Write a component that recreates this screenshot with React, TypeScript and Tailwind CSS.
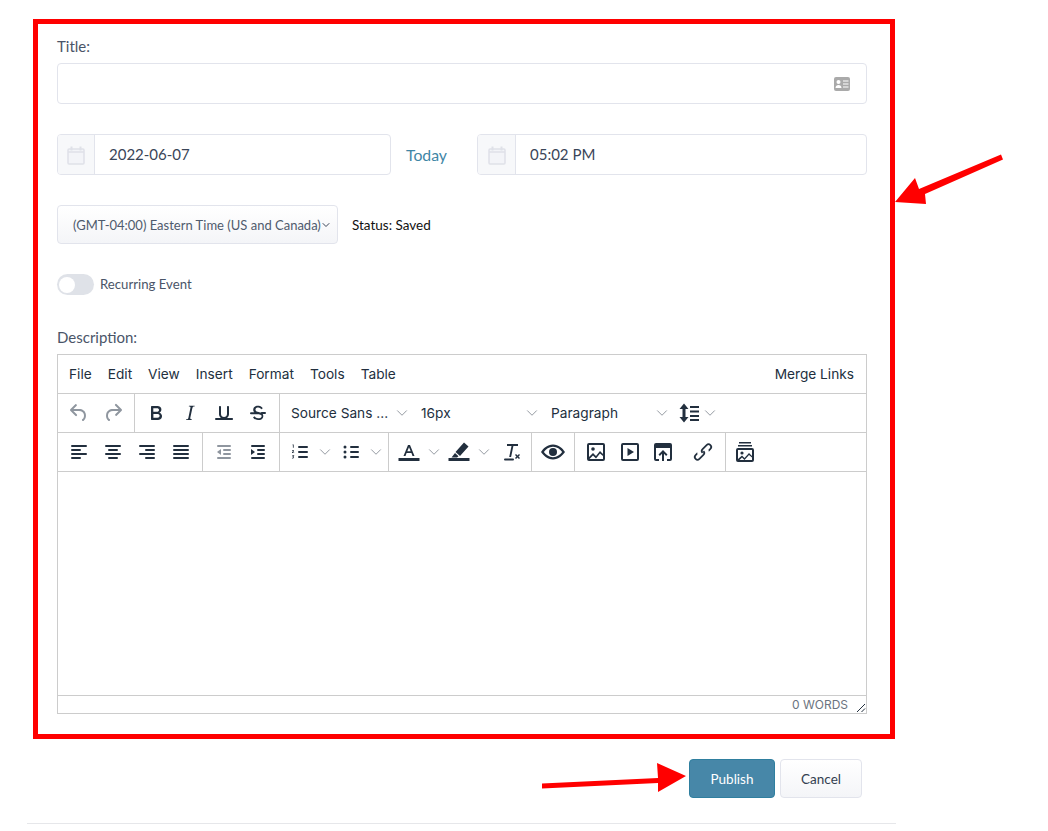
import type { ReactNode } from 'react'
import { ChevronDown } from 'lucide-react'

const sans = 'font-["Lato",sans-serif]'

function Icon({
  children,
  className = 'text-[#222f3e]',
  box = '0 0 24 24',
}: {
  children: ReactNode
  className?: string
  box?: string
}) {
  return (
    <svg viewBox={box} className={`h-6 w-6 shrink-0 fill-current ${className}`}>
      {children}
    </svg>
  )
}

function Lines({ rows }: { rows: [number, number, number][] }) {
  return (
    <>
      {rows.map(([x, y, w]) => (
        <rect key={`${x}-${y}`} x={x} y={y} width={w} height={2} rx={1} />
      ))}
    </>
  )
}

function Chevron() {
  return <ChevronDown className="h-[18px] w-[18px] shrink-0 text-[#8d939b]" strokeWidth={1.25} />
}

function Btn({ children, w = 'w-[34px]' }: { children: ReactNode; w?: string }) {
  return <div className={`flex h-[38px] items-center justify-center ${w}`}>{children}</div>
}

function Split({ children, w = 'w-[51px]' }: { children: ReactNode; w?: string }) {
  return (
    <div className={`flex h-[38px] items-center pl-1 ${w}`}>
      {children}
      <span className="ml-[4px]">
        <Chevron />
      </span>
    </div>
  )
}

function Group({ children, className = '' }: { children: ReactNode; className?: string }) {
  return <div className={`flex border-r border-[#ccc] pl-1 ${className}`}>{children}</div>
}

function FontSelect({ label }: { label: string }) {
  return (
    <div className="flex h-[38px] w-[130px] items-center justify-between pl-[7px] pr-[3px] text-[13.7px] text-[#222f3e]">
      <span className="pt-px">{label}</span>
      <Chevron />
    </div>
  )
}

function Calendar() {
  return (
    <svg viewBox="0 0 18 20" className="h-5 w-[18px] fill-none stroke-[#dfe1e8]">
      <rect x="1" y="4" width="16" height="15" rx="1" fill="#f3f4f8" strokeWidth="1.5" />
      <path d="M1 7h16" strokeWidth="1.5" />
      <path d="M4.500 1.500v4M13.500 1.500v4" strokeWidth="2" />
    </svg>
  )
}

function DateField({ value, className, addon }: { value: string; className: string; addon: string }) {
  return (
    <div className={`flex h-[41px] overflow-hidden rounded border border-[#e2e4ec] ${className}`}>
      <div className={`flex items-center justify-center border-r border-[#e2e4ec] bg-[#f7f8fa] ${addon}`}>
        <Calendar />
      </div>
      <div className="flex items-center pl-[14px] text-[15px] text-[#3a4558]">{value}</div>
    </div>
  )
}

export default function App() {
  return (
    <div className={`relative h-[831px] w-[1048px] overflow-hidden bg-white ${sans}`}>
      <div className="pl-[33px] pt-[19px]">
        <div className="h-[720px] w-[862px] border-[5px] border-[#ff0000] pl-[19px] pr-[23px] pt-[10px]">
          <div className="h-6 text-[15px] leading-6 text-[#4a5568]">Title:</div>

          <div className="mt-[5px] flex h-[41px] items-center justify-end rounded border border-[#e2e4ec] pr-4">
            <svg viewBox="0 0 16 14" className="h-[14px] w-4">
              <rect width="16" height="14" rx="2" fill="#aaa" />
              <circle cx="4.500" cy="5" r="2" fill="#fff" />
              <path d="M1.500 11c0-2 1.300-3 3-3s3 1 3 3z" fill="#fff" />
              <path d="M9 4h5.500M9 7h5.500M9 10h5.500" stroke="#fff" strokeWidth="1.200" />
            </svg>
          </div>

          <div className="mt-[30px] flex items-center">
            <DateField value="2022-06-07" className="w-[334px]" addon="w-[37px]" />
            <div className="ml-[15px] w-[71px] text-[15.8px] text-[#3f86a6]">Today</div>
            <DateField value="05:02 PM" className="flex-1" addon="w-[38px]" />
          </div>

          <div className="mt-[30px] flex items-center">
            <div className="flex h-[39px] w-[281px] items-center rounded border border-[#e2e4ec] bg-gradient-to-b from-white to-[#f4f5f8] pl-[15px] text-[13px] text-[#4f5b6d]">
              <span className="whitespace-nowrap pt-[2px]">(GMT-04:00) Eastern Time (US and Canada)</span>
              <ChevronDown className="-ml-[1px] h-3 w-3 shrink-0 text-[#3a4558]" strokeWidth={2} />
            </div>
            <div className="ml-[14px] pt-px text-[13.5px] text-[#111]">Status: Saved</div>
          </div>

          <div className="mt-[30px] flex h-[21px] items-center">
            <div className="flex h-[21px] w-[37px] items-center rounded-full bg-[#dfe2e8] pl-[2px]">
              <div className="h-[16px] w-[16px] rounded-full bg-white" />
            </div>
            <div className="ml-[6px] pt-px text-[13.2px] text-[#4a5568]">Recurring Event</div>
          </div>

          <div className="mt-[30px] h-[24px] text-[15px] leading-6 text-[#4a5568]">Description:</div>

          <div className="mt-[5px] flex h-[360px] flex-col border border-[#ccc] font-['Inter',sans-serif]">
            <div className="flex h-[39px] shrink-0 items-center justify-between border-b border-[#ccc] pl-[11px] pr-3 pt-px text-[13.7px] text-[#222f3e]">
              <div className="flex gap-4">
                <span>File</span>
                <span>Edit</span>
                <span>View</span>
                <span>Insert</span>
                <span>Format</span>
                <span>Tools</span>
                <span>Table</span>
              </div>
              <span>Merge Links</span>
            </div>

            <div className="flex h-[39px] shrink-0 border-b border-[#ccc]">
              <Group className="pr-1">
                <Btn>
                  <Icon className="text-[#8f969f]">
                    <path d="M6.400 8H12c3.700 0 6.200 2 6.800 5.100.6 2.700-.4 5.600-2.300 6.800a1 1 0 0 1-1-1.800c1.100-.6 1.800-2.700 1.400-4.600-.5-2.100-2.100-3.500-4.900-3.500H6.400l3.300 3.300a1 1 0 1 1-1.400 1.400l-5-5a1 1 0 0 1 0-1.400l5-5a1 1 0 0 1 1.400 1.400L6.400 8Z" />
                  </Icon>
                </Btn>
                <Btn>
                  <Icon className="text-[#8f969f]">
                    <path d="M17.600 10H12c-2.800 0-4.400 1.400-4.900 3.500-.4 2 .3 4 1.400 4.600a1 1 0 1 1-1 1.800c-2-1.200-2.900-4.100-2.300-6.800.6-3 3-5.100 6.800-5.100h5.600l-3.300-3.300a1 1 0 1 1 1.400-1.400l5 5a1 1 0 0 1 0 1.400l-5 5a1 1 0 0 1-1.400-1.400l3.300-3.300Z" />
                  </Icon>
                </Btn>
              </Group>
              <Group className="pr-1">
                <Btn>
                  <Icon>
                    <path d="M7.800 19c-.3 0-.5 0-.6-.2l-.2-.5V5.700c0-.2 0-.4.2-.5l.6-.2h5c1.500 0 2.700.3 3.500 1 .7.6 1.100 1.400 1.100 2.500a3 3 0 0 1-.6 1.900c-.4.6-1 1-1.600 1.200.4.1.9.3 1.300.6s.8.7 1 1.200c.4.4.5 1 .5 1.600 0 1.300-.4 2.300-1.300 3-.8.7-2.100 1-3.800 1H7.800Zm5-8.300c.6 0 1.200-.1 1.600-.5.4-.3.6-.7.6-1.300 0-1.100-.8-1.700-2.300-1.700H9.300v3.500h3.400Zm.5 6c.7 0 1.300-.1 1.700-.4.4-.4.6-.9.6-1.500s-.2-1-.7-1.400c-.4-.3-1-.4-2-.4H9.400v3.800h4Z" />
                  </Icon>
                </Btn>
                <Btn>
                  <Icon>
                    <path d="m16.700 4.700-.1.900h-.3c-.6 0-1 0-1.400.3-.3.3-.4.6-.5 1.100l-2.100 9.800v.6c0 .5.4.8 1.400.8h.2l-.2.800H8l.2-.8h.2c1.100 0 1.800-.5 2-1.500l2-9.800.1-.5c0-.6-.4-.8-1.400-.8h-.3l.2-.9h5.800Z" />
                  </Icon>
                </Btn>
                <Btn>
                  <Icon>
                    <path d="M16 5c.6 0 1 .4 1 1v7c0 2.800-2.200 5-5 5s-5-2.200-5-5V6c0-.6.4-1 1-1s1 .4 1 1v7c0 1.700 1.300 3 3 3s3-1.300 3-3V6c0-.6.4-1 1-1ZM4 17h16c.6 0 1 .4 1 1s-.4 1-1 1H4a1 1 0 1 1 0-2Z" />
                  </Icon>
                </Btn>
                <Btn>
                  <Icon>
                    <path d="M15.600 8.500c-.5-.7-1-1.100-1.300-1.300-.6-.4-1.300-.6-2-.6-2.700 0-2.800 1.700-2.800 2.100 0 1.600 1.800 2 3.200 2.300 4.400.9 4.600 2.800 4.600 3.900 0 1.400-.7 4.100-5 4.100A6.200 6.200 0 0 1 7 16.400l1.500-1.100c.4.600 1.600 2 3.700 2 1.600 0 2.500-.4 3-1 .3-.4.4-.8.4-1.100 0-.8-.5-1.400-2.700-1.900H5a1 1 0 0 1 0-2h3.200a3.400 3.400 0 0 1-1-2.400c0-2.100 1.300-4.100 4.800-4.100 1.400 0 2.400.4 3.300 1 .4.3.9.8 1.500 1.500l-1.200.7ZM14.500 11H19a1 1 0 0 1 0 2h-2z" />
                  </Icon>
                </Btn>
              </Group>
              <div className="flex pl-1">
                <FontSelect label="Source Sans ..." />
                <FontSelect label="16px" />
                <FontSelect label="Paragraph" />
                <div className="flex h-[38px] items-center pl-[3px]">
                  <Icon>
                    <path d="M7 2.500 11.500 8H8.500v8h3L7 21.500 2.500 16h3V8h-3zM13 5h9v2h-9zM13 9.500h9v2h-9zM13 14h9v2h-9zM13 18h9v2h-9z" />
                  </Icon>
                  <Chevron />
                </div>
              </div>
            </div>

            <div className="flex h-[39px] shrink-0 border-b border-[#ccc]">
              <Group className="pr-1">
                <Btn>
                  <Icon>
                    <Lines rows={[[4, 5, 16], [4, 9, 10], [4, 13, 16], [4, 17, 10]]} />
                  </Icon>
                </Btn>
                <Btn>
                  <Icon>
                    <Lines rows={[[4, 5, 16], [7, 9, 10], [4, 13, 16], [7, 17, 10]]} />
                  </Icon>
                </Btn>
                <Btn>
                  <Icon>
                    <Lines rows={[[4, 5, 16], [10, 9, 10], [4, 13, 16], [10, 17, 10]]} />
                  </Icon>
                </Btn>
                <Btn>
                  <Icon>
                    <Lines rows={[[4, 5, 16], [4, 9, 16], [4, 13, 16], [4, 17, 16]]} />
                  </Icon>
                </Btn>
              </Group>
              <Group className="pr-1">
                <Btn>
                  <Icon className="text-[#8f969f]">
                    <Lines rows={[[5, 5, 14], [11, 9, 8], [11, 13, 8], [5, 17, 14]]} />
                    <path d="M9 9v6l-4-3z" />
                  </Icon>
                </Btn>
                <Btn>
                  <Icon>
                    <Lines rows={[[5, 5, 14], [11, 9, 8], [11, 13, 8], [5, 17, 14]]} />
                    <path d="M5 9v6l4-3z" />
                  </Icon>
                </Btn>
              </Group>
              <Group className="pr-[2px]">
                <Split>
                  <Icon>
                    <Lines rows={[[10, 6, 10], [10, 11, 10], [10, 16, 10]]} />
                    <path d="M4.500 4.500h1.200v3.200h-.8V5.300h-.4zM4 10.200c.3-.5 2.200-.5 2 .7 0 .7-1 1-1.200 1.500H6.200V13H4v-.7c.5-.9 1.300-1 1.300-1.300 0-.4-.7-.3-1 0zM4 15.200h2.200v.6l-.8.8c1 0 1 1.900-.4 1.900-.5 0-.9-.1-1.100-.3l.2-.6c.4.300 1.300.3 1.300-.2 0-.3-.4-.4-.9-.4v-.5l.7-.7H4z" />
                  </Icon>
                </Split>
                <Split>
                  <Icon>
                    <Lines rows={[[11, 6, 9], [11, 11, 9], [11, 16, 9]]} />
                    <circle cx="6" cy="7" r="1.500" />
                    <circle cx="6" cy="12" r="1.500" />
                    <circle cx="6" cy="17" r="1.500" />
                  </Icon>
                </Split>
              </Group>
              <Group className="pr-1">
                <Split w="w-[50px]">
                  <Icon>
                    <path d="M6.500 16 11 5h2l4.500 11h-2l-1.100-3H9.600l-1.100 3zm3.800-4.700h3.400L12 7.200z" />
                    <rect x="1.500" y="18" width="21" height="3" />
                  </Icon>
                </Split>
                <Split>
                  <Icon>
                    <path d="m17 2.500 4.500 4L13 16l-4.500-4zM8 13l3.500 3.200L10 17.500H4.500z" />
                    <rect x="1.500" y="18" width="21" height="3" />
                  </Icon>
                </Split>
                <Btn w="w-[33px]">
                  <Icon>
                    <path d="M8 4h11v2h-4.600l-2.300 11H10.200l2.300-11H8z" />
                    <rect x="5" y="18.500" width="10" height="2" rx="1" />
                    <path d="m16 15 1-1 1.500 1.500L20 14l1 1-1.500 1.500L21 18l-1 1-1.500-1.500L17 19l-1-1 1.500-1.500z" />
                  </Icon>
                </Btn>
              </Group>
              <Group className="pr-1">
                <Btn>
                  <Icon box="1.500 1.500 21 21">
                    <path d="M12 5.500c5 0 8.500 3.500 10.500 6.500-2 3-5.500 6.500-10.500 6.500S3.500 15 1.500 12C3.500 9 7 5.500 12 5.500Zm0 2C8.500 7.500 5.800 9.700 4 12c1.800 2.300 4.500 4.500 8 4.500s6.200-2.200 8-4.500c-1.800-2.300-4.500-4.500-8-4.500Z" />
                    <circle cx="12" cy="12" r="3.500" />
                  </Icon>
                </Btn>
              </Group>
              <div className="flex pl-1">
                <Btn>
                  <Icon>
                    <path
                      fillRule="evenodd"
                      d="M5 3h14a2 2 0 0 1 2 2v14a2 2 0 0 1-2 2H5a2 2 0 0 1-2-2V5a2 2 0 0 1 2-2Zm0 2v14h14V5Z"
                    />
                    <circle cx="9" cy="9" r="1.800" />
                    <path d="m5 17 4-4 3 3 4-5 3 3v2l-3-2.500-4 5-3-3-3.500 3.500H5z" />
                  </Icon>
                </Btn>
                <Btn>
                  <Icon>
                    <path
                      fillRule="evenodd"
                      d="M5 3h14a2 2 0 0 1 2 2v14a2 2 0 0 1-2 2H5a2 2 0 0 1-2-2V5a2 2 0 0 1 2-2Zm0 2v14h14V5Z"
                    />
                    <path d="M9.500 8 16 12l-6.500 4z" />
                  </Icon>
                </Btn>
                <Btn w="w-[32px]">
                  <Icon>
                    <path
                      fillRule="evenodd"
                      d="M5 3h14a2 2 0 0 1 2 2v14a2 2 0 0 1-2 2h-3v-2h3V8H5v11h3v2H5a2 2 0 0 1-2-2V5a2 2 0 0 1 2-2Z"
                    />
                    <path d="m12 10 4.500 4.500-1.400 1.400-2.100-2.100V21h-2v-7.200l-2.100 2.100-1.400-1.400z" />
                  </Icon>
                </Btn>
                <Btn w="w-[46px]">
                  <span className="pl-[2px]">
                    <Icon>
                      <path d="M6.200 12.300 4 14.500a3.500 3.500 0 1 0 5 5l4-4a3.500 3.500 0 0 0 0-5l-1.200 1.200a1.800 1.800 0 0 1 0 2.600l-4 4a1.800 1.800 0 1 1-2.600-2.600l1.400-1.400a5 5 0 0 1-.4-2ZM17.800 11.700 20 9.500a3.500 3.500 0 1 0-5-5l-4 4a3.500 3.500 0 0 0 0 5l1.200-1.200a1.800 1.800 0 0 1 0-2.600l4-4a1.800 1.800 0 1 1 2.600 2.600l-1.400 1.400a5 5 0 0 1 .4 2Z" />
                    </Icon>
                  </span>
                </Btn>
              </div>
              <div className="flex border-l border-[#ccc] pl-[2px]">
                <Btn w="w-[34px]">
                  <Icon>
                    <path d="M6 2h12v1.500H6zM5 5h14v1.500H5z" />
                    <path
                      fillRule="evenodd"
                      d="M5 8h14a2 2 0 0 1 2 2v10a2 2 0 0 1-2 2H5a2 2 0 0 1-2-2V10a2 2 0 0 1 2-2Zm0 2v10h14V10Z"
                    />
                    <circle cx="9" cy="13" r="1.600" />
                    <path d="m5 19 4-3.500 2.500 2.500 4.500-5 3 3v1.500l-3-2.500-4.500 5-2.500-2.500L6.500 20H5z" />
                  </Icon>
                </Btn>
              </div>
            </div>

            <div className="flex-1" />

            <div className="relative flex h-[18px] shrink-0 items-center justify-end border-t border-[#ccc] pr-[18px] text-[12px] text-[#6b7480]">
              0 WORDS
              <svg viewBox="0 0 10 10" className="absolute bottom-0 right-0 h-[10px] w-[10px] fill-none stroke-[#222f3e]">
                <path d="M1 9 9 1M5.500 9 9 5.500" strokeWidth="1" />
              </svg>
            </div>
          </div>
        </div>
      </div>

      <div className="ml-[689px] mt-5 flex gap-[5px] pt-0 text-[13.5px]">
        <div className="flex h-[39px] w-[86px] items-center justify-center rounded border border-[#2f7f9f] bg-[#4787a8] pt-px text-white">
          Publish
        </div>
        <div className="flex h-[39px] w-[82px] items-center justify-center rounded border border-[#e2e4ec] bg-gradient-to-b from-white to-[#f4f5f8] pt-px text-[#333f50]">
          Cancel
        </div>
      </div>
      <div className="ml-[27px] mt-[25px] h-px w-[869px] bg-[#e6e7ea]" />

      <svg className="absolute inset-0 h-full w-full fill-[#ff0000]" viewBox="0 0 1048 831">
        <polygon points="1001,154.500 1003,159.500 925,194 926,204 895,202 915,178 919,189" />
        <polygon points="542,783.500 658,778 657,763 686,776 658,792 658,783 542,788.500" />
      </svg>
    </div>
  )
}
